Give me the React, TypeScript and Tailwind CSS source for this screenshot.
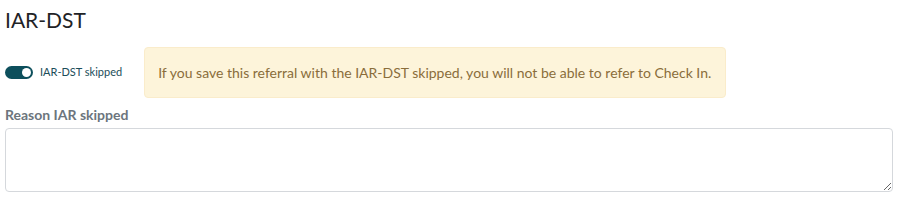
import React from 'react'

export default function App() {
  const [skipped, setSkipped] = React.useState(true)

  return (
    <div className="w-[903px] h-[205px] bg-white px-[5px] pt-[6px]" style={{ fontFamily: 'Lato, "Open Sans", sans-serif' }}>
      <h2 className="text-[21px] leading-[28px] text-[#1f2326]">IAR-DST</h2>

      <div className="mt-[13px] flex items-center">
        <button
          type="button"
          onClick={() => setSkipped(!skipped)}
          className="flex items-center gap-[7px]"
        >
          <span className={`relative w-[28px] h-[13px] rounded-full ${skipped ? 'bg-[#0d4f5c]' : 'bg-gray-300'}`}>
            <span className={`absolute top-[2px] w-[9px] h-[9px] rounded-full bg-white ${skipped ? 'right-[2px]' : 'left-[2px]'}`} />
          </span>
          <span className="text-[11px] text-[#1b4d59]">IAR-DST skipped</span>
        </button>

        <div className="ml-[22px] w-[582px] h-[51px] flex items-center px-[13px] rounded-[4px] bg-[#fdf4da] border border-[#faeccb] text-[14px] whitespace-nowrap text-[#8a6d3b]">
          If you save this referral with the IAR-DST skipped, you will not be able to refer to Check In.
        </div>
      </div>

      <label className="block mt-[6px] text-[14px] font-bold text-[#6c757d]">Reason IAR skipped</label>
      <textarea className="mt-[3px] block w-[888px] h-[64px] rounded-[4px] border border-[#d5d8dc] outline-none" />
    </div>
  )
}
